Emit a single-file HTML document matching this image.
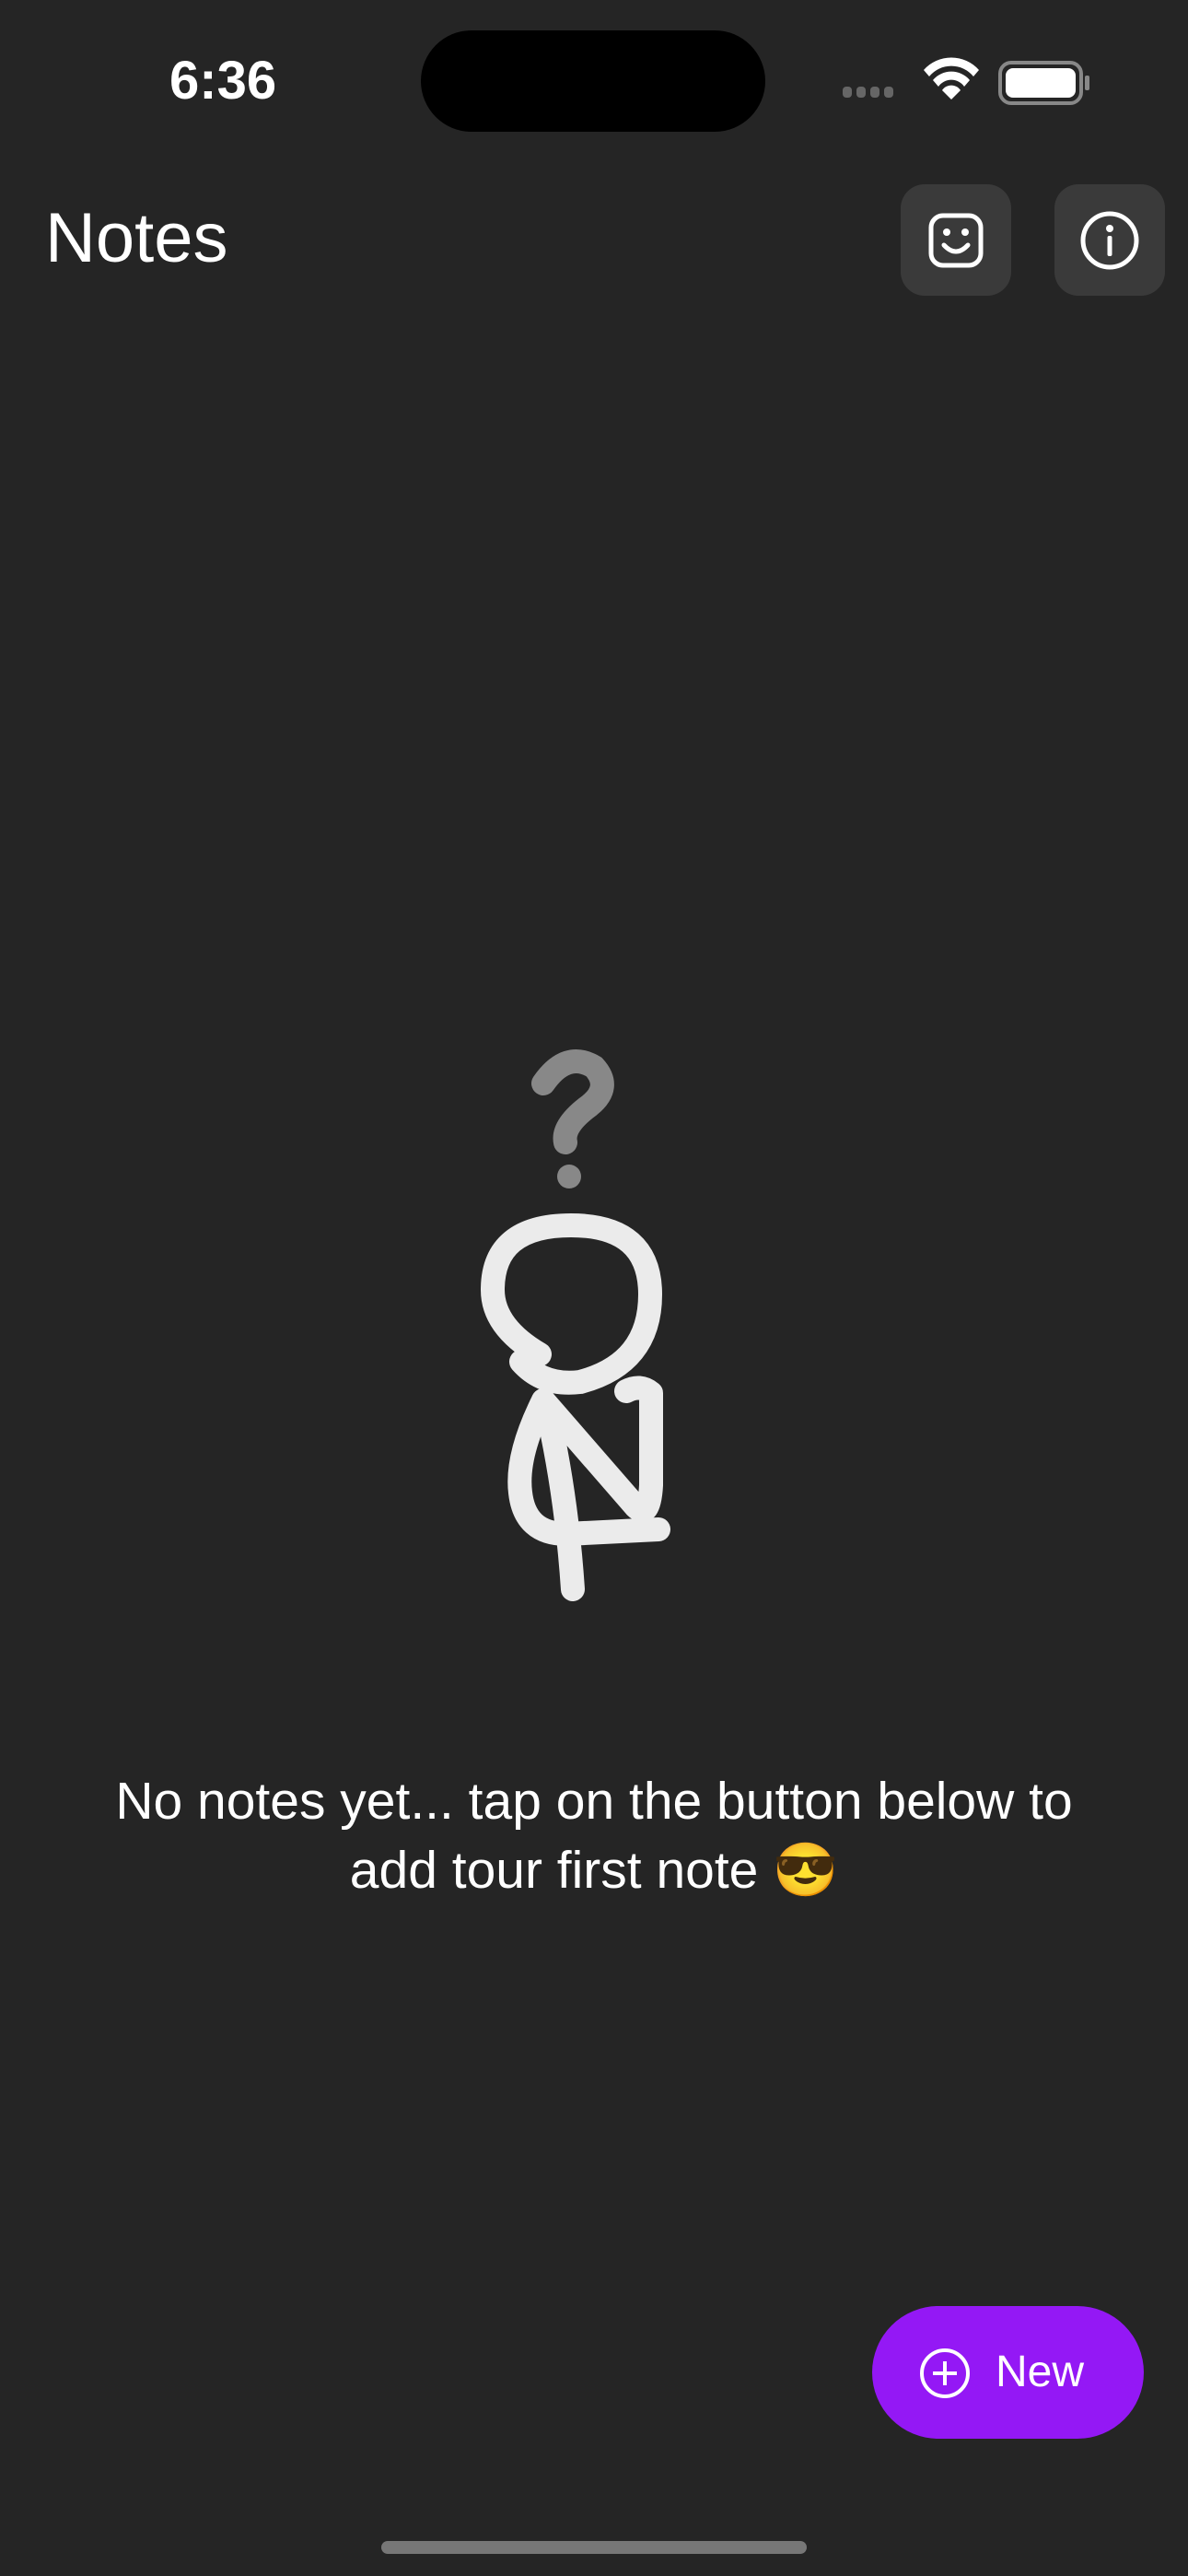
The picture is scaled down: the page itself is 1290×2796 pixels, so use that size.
<!DOCTYPE html>
<html><head><meta charset="utf-8"><style>
html,body{margin:0;padding:0;background:#252525;}
body{width:1290px;height:2796px;position:relative;overflow:hidden;font-family:"Liberation Sans","Noto Sans CJK JP",sans-serif;color:#fff;}
.abs{position:absolute;}
.btn{position:absolute;top:200px;width:120px;height:121px;border-radius:26px;background:#3a3a3a;}
.msg{position:absolute;left:0;width:1290px;top:1918px;text-align:center;font-size:57px;line-height:75px;}
.new{position:absolute;left:947px;top:2503px;width:295px;height:144px;border-radius:72px;background:#9418f5;}
</style></head><body>
<div class="abs" style="left:184px;top:54px;font-size:58px;font-weight:bold;">6:36</div>
<div class="abs" style="left:457px;top:33px;width:374px;height:110px;border-radius:55px;background:#000;"></div>
<svg class="abs" style="left:910px;top:60px" width="280" height="60" viewBox="0 0 280 60">
<g fill="#666"><rect x="5" y="34" width="10" height="12" rx="4"/><rect x="20" y="34" width="10" height="12" rx="4"/><rect x="35" y="34" width="10" height="12" rx="4"/><rect x="50" y="34" width="10" height="12" rx="4"/></g>
<g fill="#fff"><path d="M93 16 A40 40 0 0 1 153 16 L147 23 A31 31 0 0 0 99 23Z"/><path d="M103 27 A26 26 0 0 1 143 27 L137 34 A17 17 0 0 0 109 34Z"/><path d="M113 38 A12 12 0 0 1 133 38 L123 48Z"/></g>
<rect x="176" y="8" width="88" height="44" rx="12" fill="none" stroke="#888" stroke-width="4"/>
<rect x="182" y="14" width="76" height="32" rx="8" fill="#fff"/>
<rect x="268" y="22" width="5" height="16" rx="2" fill="#888"/>
</svg>
<div class="abs" style="left:49px;top:215px;font-size:76px;">Notes</div>
<div class="btn" style="left:978px;"><svg width="120" height="121" viewBox="0 0 120 121"><rect x="33" y="34" width="54" height="54" rx="13" fill="none" stroke="#fff" stroke-width="5"/><circle cx="50" cy="52" r="4" fill="#fff"/><circle cx="70" cy="52" r="4" fill="#fff"/><path d="M47 66 Q60 80 73 66" fill="none" stroke="#fff" stroke-width="5" stroke-linecap="round"/></svg></div>
<div class="btn" style="left:1145px;"><svg width="120" height="121" viewBox="0 0 120 121"><circle cx="60" cy="61" r="29" fill="none" stroke="#fff" stroke-width="5"/><circle cx="60" cy="48" r="4" fill="#fff"/><rect x="57.5" y="56" width="5" height="22" rx="2" fill="#fff"/></svg></div>
<svg class="abs" style="left:0;top:0" width="1290" height="2796">
<g fill="none" stroke="#888" stroke-width="26" stroke-linecap="round"><path d="M590 1176 Q615 1140 645 1158 Q665 1180 640 1200 Q610 1222 614 1240"/></g>
<circle cx="618" cy="1277" r="13" fill="#888"/>
<g fill="none" stroke="#ebebeb" stroke-width="26" stroke-linecap="round" stroke-linejoin="round">
<path d="M586 1470 Q535 1440 535 1400 Q535 1330 620 1330 Q706 1330 706 1405 Q706 1480 630 1500 Q590 1505 566 1478"/>
<path d="M590 1520 L690 1635 Q705 1650 707 1612 L707 1512 Q695 1502 680 1510"/>
<path d="M590 1520 Q560 1580 565 1620 Q570 1665 615 1665 L715 1660"/>
<path d="M593 1525 Q615 1620 622 1725"/>
</g>
</svg>
<div class="msg">No notes yet... tap on the button below to<br>add tour first note 😎</div>
<div class="new"><svg class="abs" style="left:50px;top:44px" width="58" height="58" viewBox="0 0 58 58"><circle cx="29" cy="29" r="25" fill="none" stroke="#fff" stroke-width="4"/><path d="M29 16V42M16 29H42" stroke="#fff" stroke-width="4"/></svg><div class="abs" style="left:134px;top:44px;font-size:48px;">New</div></div>
<div class="abs" style="left:414px;top:2758px;width:462px;height:14px;border-radius:7px;background:#777;"></div>
</body></html>
